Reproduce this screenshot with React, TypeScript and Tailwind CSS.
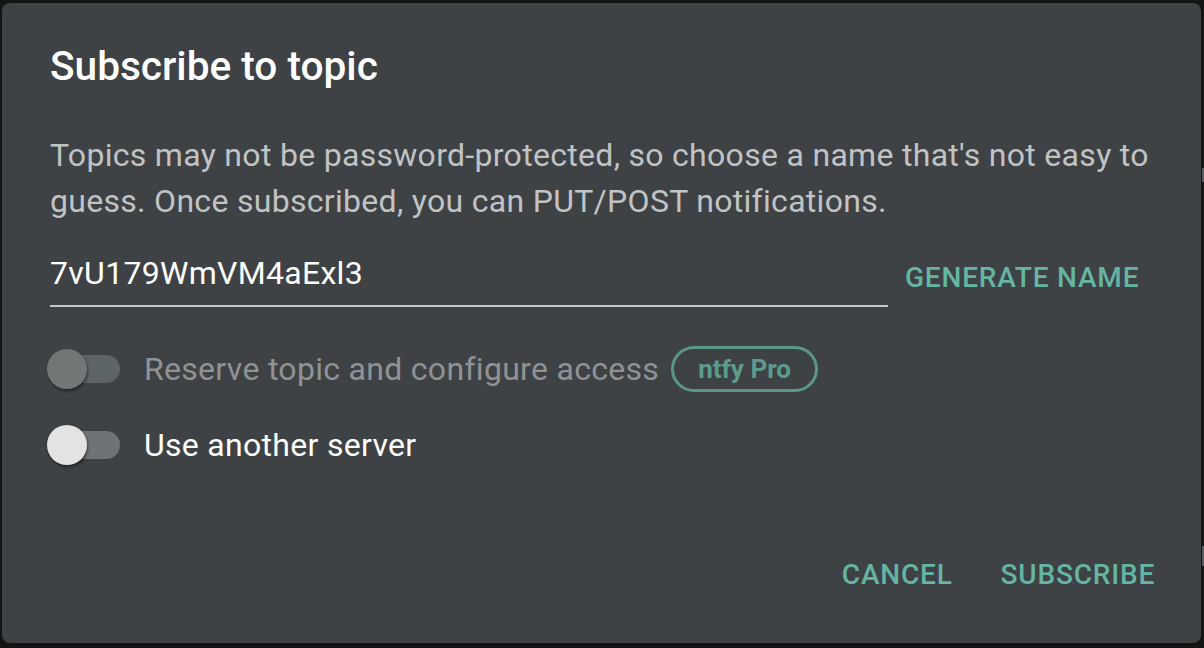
import React from "react";

const font = { fontFamily: "Roboto, 'Noto Sans', Arial, sans-serif" };

function Toggle({ disabled }: { disabled?: boolean }) {
  return (
    <div className="relative w-[74px] h-[40px] shrink-0">
      <div
        className={`absolute left-[8px] top-[6px] w-[65px] h-[28px] rounded-full ${
          disabled ? "bg-[#5d6466]" : "bg-[#6f7375]"
        }`}
      />
      <div
        className={`absolute left-0 top-0 w-[40px] h-[40px] rounded-full shadow-[1px_2px_3px_rgba(0,0,0,0.45)] ${
          disabled ? "bg-[#727677]" : "bg-[#e3e3e3]"
        }`}
      />
    </div>
  );
}

export default function App() {
  return (
    <div
      className="w-[1204px] h-[648px] bg-[#131515] pt-[3px] pl-[2px] relative overflow-hidden"
      style={font}
    >
      <div className="absolute right-0 top-[168px] w-[2px] h-[14px] bg-[#5a5d5f]" />
      <div className="absolute right-0 top-[546px] w-[2px] h-[20px] bg-[#5a5d5f]" />
      <div className="w-[1199px] h-[640px] rounded-[8px] bg-[#3e4245] flex flex-col pl-[48px] pr-[46px]">
        <div className="pt-[32px] text-[40.6px] leading-[62px] font-medium text-white">
          Subscribe to topic
        </div>
        <div className="mt-[35px] text-[32px] leading-[46px] tracking-[0.3px] text-[#c1c3c4]">
          Topics may not be password-protected, so choose a name that's not easy to guess. Once subscribed, you can PUT/POST notifications.
        </div>
        <div className="flex items-start mt-[26px]">
          <div className="w-[838px] shrink-0">
            <div className="text-[32px] leading-[46px] tracking-[0.3px] text-white pb-[9px] border-b-[2px] border-[#c4c5c6]">
              7vU179WmVM4aExl3
            </div>
          </div>
          <div className="ml-[17px] mt-[5px] text-[28px] leading-[46px] font-medium uppercase tracking-[0.02857em] text-[#65b5a3]">
            Generate name
          </div>
        </div>
        <div className="flex items-center h-[76px] mt-[24px] -ml-[49px] pl-[46px]">
          <Toggle disabled />
          <div className="ml-[23px] text-[32px] leading-[46px] tracking-[0.3px] text-[#909394]">
            Reserve topic and configure access
          </div>
          <div className="ml-[12px] h-[46px] px-[24px] rounded-full border-[3px] border-[#5a978a] text-[#5c9c8d] text-[26px] font-bold flex items-center">
            ntfy Pro
          </div>
        </div>
        <div className="flex items-center h-[76px] -ml-[49px] pl-[46px]">
          <Toggle />
          <div className="ml-[23px] text-[32px] leading-[46px] tracking-[0.3px] text-white">
            Use another server
          </div>
        </div>
        <div className="flex-1" />
        <div className="flex justify-end gap-[48px] pb-[45px] text-[28px] leading-[46px] font-medium uppercase tracking-[0.02857em] text-[#65b5a3]">
          <span>Cancel</span>
          <span>Subscribe</span>
        </div>
      </div>
    </div>
  );
}
